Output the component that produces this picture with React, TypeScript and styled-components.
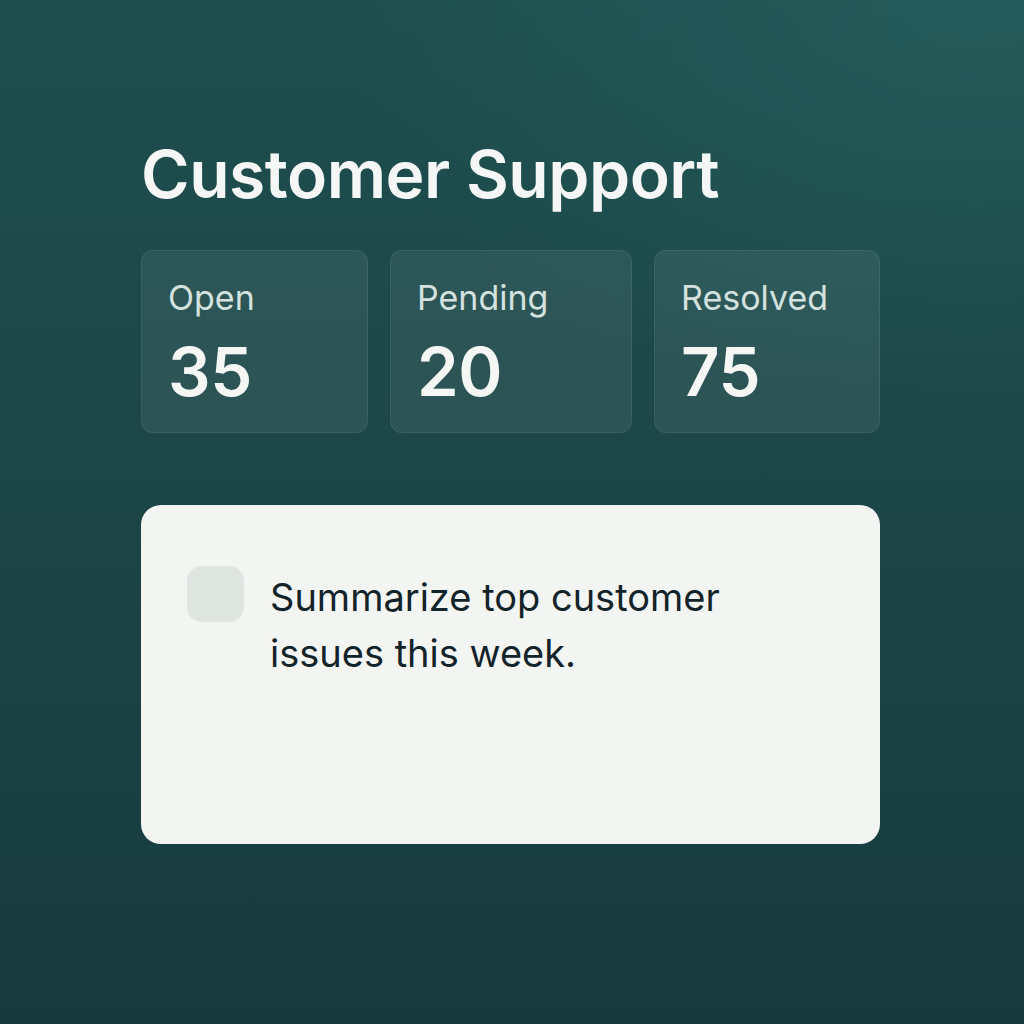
import React from "react";
import styled, { createGlobalStyle } from "styled-components";

const Global = createGlobalStyle`
  html, body { margin: 0; padding: 0; }
  body { font-family: Inter, "Noto Sans", sans-serif; }
`;

const Page = styled.div`
  width: 1024px;
  height: 1024px;
  box-sizing: border-box;
  padding: 134px 0 0 141px;
  background:
    radial-gradient(ellipse 900px 600px at 95% 0%, rgba(40, 100, 98, 0.55), rgba(40, 100, 98, 0) 70%),
    linear-gradient(180deg, #1f4f50 0%, #1c4547 50%, #173a3d 100%);
  display: flex;
  flex-direction: column;
`;

const Title = styled.h1`
  margin: 0;
  font-size: 66px;
  line-height: 80px;
  font-weight: 600;
  color: #f4f7f5;
  letter-spacing: -0.5px;
`;

const Stats = styled.div`
  margin-top: 36px;
  display: grid;
  grid-template-columns: 227px 242px 226px;
  gap: 22px;
`;

const StatCard = styled.div`
  box-sizing: border-box;
  height: 183px;
  padding: 25px 0 0 26px;
  border-radius: 12px;
  background: rgba(255, 255, 255, 0.07);
  border: 1px solid rgba(255, 255, 255, 0.07);
  display: flex;
  flex-direction: column;
`;

const StatLabel = styled.div`
  font-size: 34px;
  line-height: 44px;
  font-weight: 400;
  color: #d3e2df;
`;

const StatValue = styled.div`
  margin-top: 14px;
  font-size: 67px;
  line-height: 76px;
  font-weight: 600;
  color: #f5f7f5;
  letter-spacing: -0.5px;
`;

const PromptCard = styled.div`
  margin-top: 72px;
  width: 739px;
  height: 339px;
  box-sizing: border-box;
  border-radius: 20px;
  background: #f3f5f2;
  padding: 61px 40px 0 46px;
  display: flex;
  align-items: flex-start;
  gap: 26px;
`;

const Check = styled.div`
  flex: none;
  width: 57px;
  height: 56px;
  border-radius: 15px;
  background: #dfe5e1;
`;

const PromptText = styled.p`
  margin: 3px 0 0;
  width: 480px;
  font-size: 38px;
  line-height: 56px;
  font-weight: 400;
  color: #13232a;
`;

const stats = [
  { label: "Open", value: "35" },
  { label: "Pending", value: "20" },
  { label: "Resolved", value: "75" },
];

export default function App() {
  return (
    <>
      <Global />
      <Page>
        <Title>Customer Support</Title>
        <Stats>
          {stats.map((s) => (
            <StatCard key={s.label}>
              <StatLabel>{s.label}</StatLabel>
              <StatValue>{s.value}</StatValue>
            </StatCard>
          ))}
        </Stats>
        <PromptCard>
          <Check />
          <PromptText>Summarize top customer issues this week.</PromptText>
        </PromptCard>
      </Page>
    </>
  );
}
